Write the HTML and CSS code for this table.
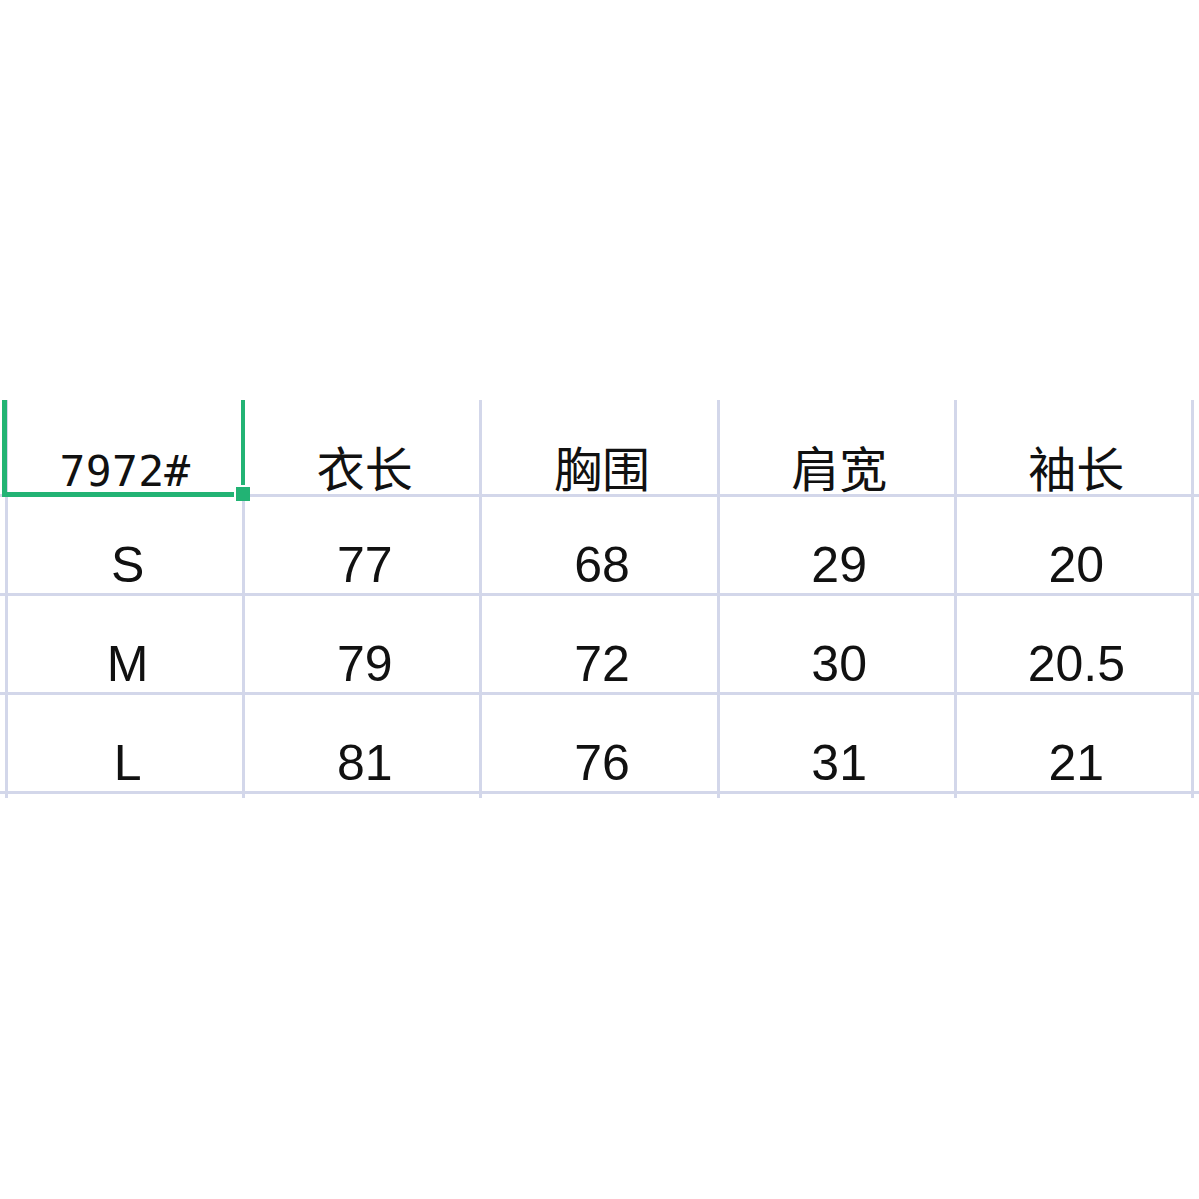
FILE: index.html
```html
<!DOCTYPE html>
<html lang="zh">
<head>
<meta charset="utf-8">
<title>7972# 尺码表</title>
<link rel="stylesheet" href="styles.css">
</head>
<body>
<div class="sheet">
  <div class="cell edge head"></div>
  <div class="cell head code selected"><span>7972#</span><i class="handle"></i></div>
  <div class="cell head cjk">衣长</div>
  <div class="cell head cjk">胸围</div>
  <div class="cell head cjk">肩宽</div>
  <div class="cell head cjk">袖长</div>
  <div class="cell tail head"></div>

  <div class="cell edge"></div>
  <div class="cell num">S</div>
  <div class="cell num">77</div>
  <div class="cell num">68</div>
  <div class="cell num">29</div>
  <div class="cell num">20</div>
  <div class="cell tail"></div>

  <div class="cell edge"></div>
  <div class="cell num">M</div>
  <div class="cell num">79</div>
  <div class="cell num">72</div>
  <div class="cell num">30</div>
  <div class="cell num">20.5</div>
  <div class="cell tail"></div>

  <div class="cell edge"></div>
  <div class="cell num">L</div>
  <div class="cell num">81</div>
  <div class="cell num">76</div>
  <div class="cell num">31</div>
  <div class="cell num">21</div>
  <div class="cell tail"></div>

  <div class="cell edge stub"></div>
  <div class="cell stub"></div>
  <div class="cell stub"></div>
  <div class="cell stub"></div>
  <div class="cell stub"></div>
  <div class="cell stub"></div>
  <div class="cell tail stub"></div>
</div>
</body>
</html>
```

FILE: styles.css
```css
html, body {
  margin: 0;
  padding: 0;
  background: #ffffff;
}

.sheet {
  margin-top: 400px;
  display: grid;
  grid-template-columns: 8px repeat(5, 237.2px) 1fr;
  grid-template-rows: 97px 99px 99px 99px 4px;
  width: 1199px;
  color: #111111;
}

.cell {
  box-sizing: border-box;
  border-right: 3px solid #d3d7ea;
  border-bottom: 3px solid #d3d7ea;
  display: flex;
  align-items: flex-end;
  justify-content: center;
  line-height: 1;
  position: relative;
  padding-left: 5px;
}

.tail {
  border-right: none;
}

.stub {
  border-bottom: none;
}

.edge {
  padding-left: 0;
}

.head {
  padding-bottom: 3px;
}

.code {
  font-family: "DejaVu Sans Mono", "Liberation Mono", monospace;
  font-size: 43px;
  padding-bottom: 1px;
  padding-left: 0;
  letter-spacing: 0.3px;
}

.cjk {
  font-family: "Noto Sans CJK SC", "Noto Sans", sans-serif;
  font-size: 48px;
  padding-bottom: 4px;
}

.num {
  font-family: "Liberation Sans", Arial, sans-serif;
  font-size: 50px;
  padding-bottom: 3px;
}

.selected::before {
  content: "";
  position: absolute;
  left: -6px;
  top: 0;
  right: -3px;
  bottom: -3px;
  border-left: 5px solid #22b374;
  border-right: 4px solid #22b374;
  border-bottom: 5px solid #22b374;
  pointer-events: none;
}

.handle {
  position: absolute;
  box-sizing: border-box;
  right: -8px;
  bottom: -7px;
  width: 16px;
  height: 16px;
  background: #22b374;
  border-top: 2px solid #ffffff;
  border-left: 2px solid #ffffff;
  z-index: 2;
}
```
